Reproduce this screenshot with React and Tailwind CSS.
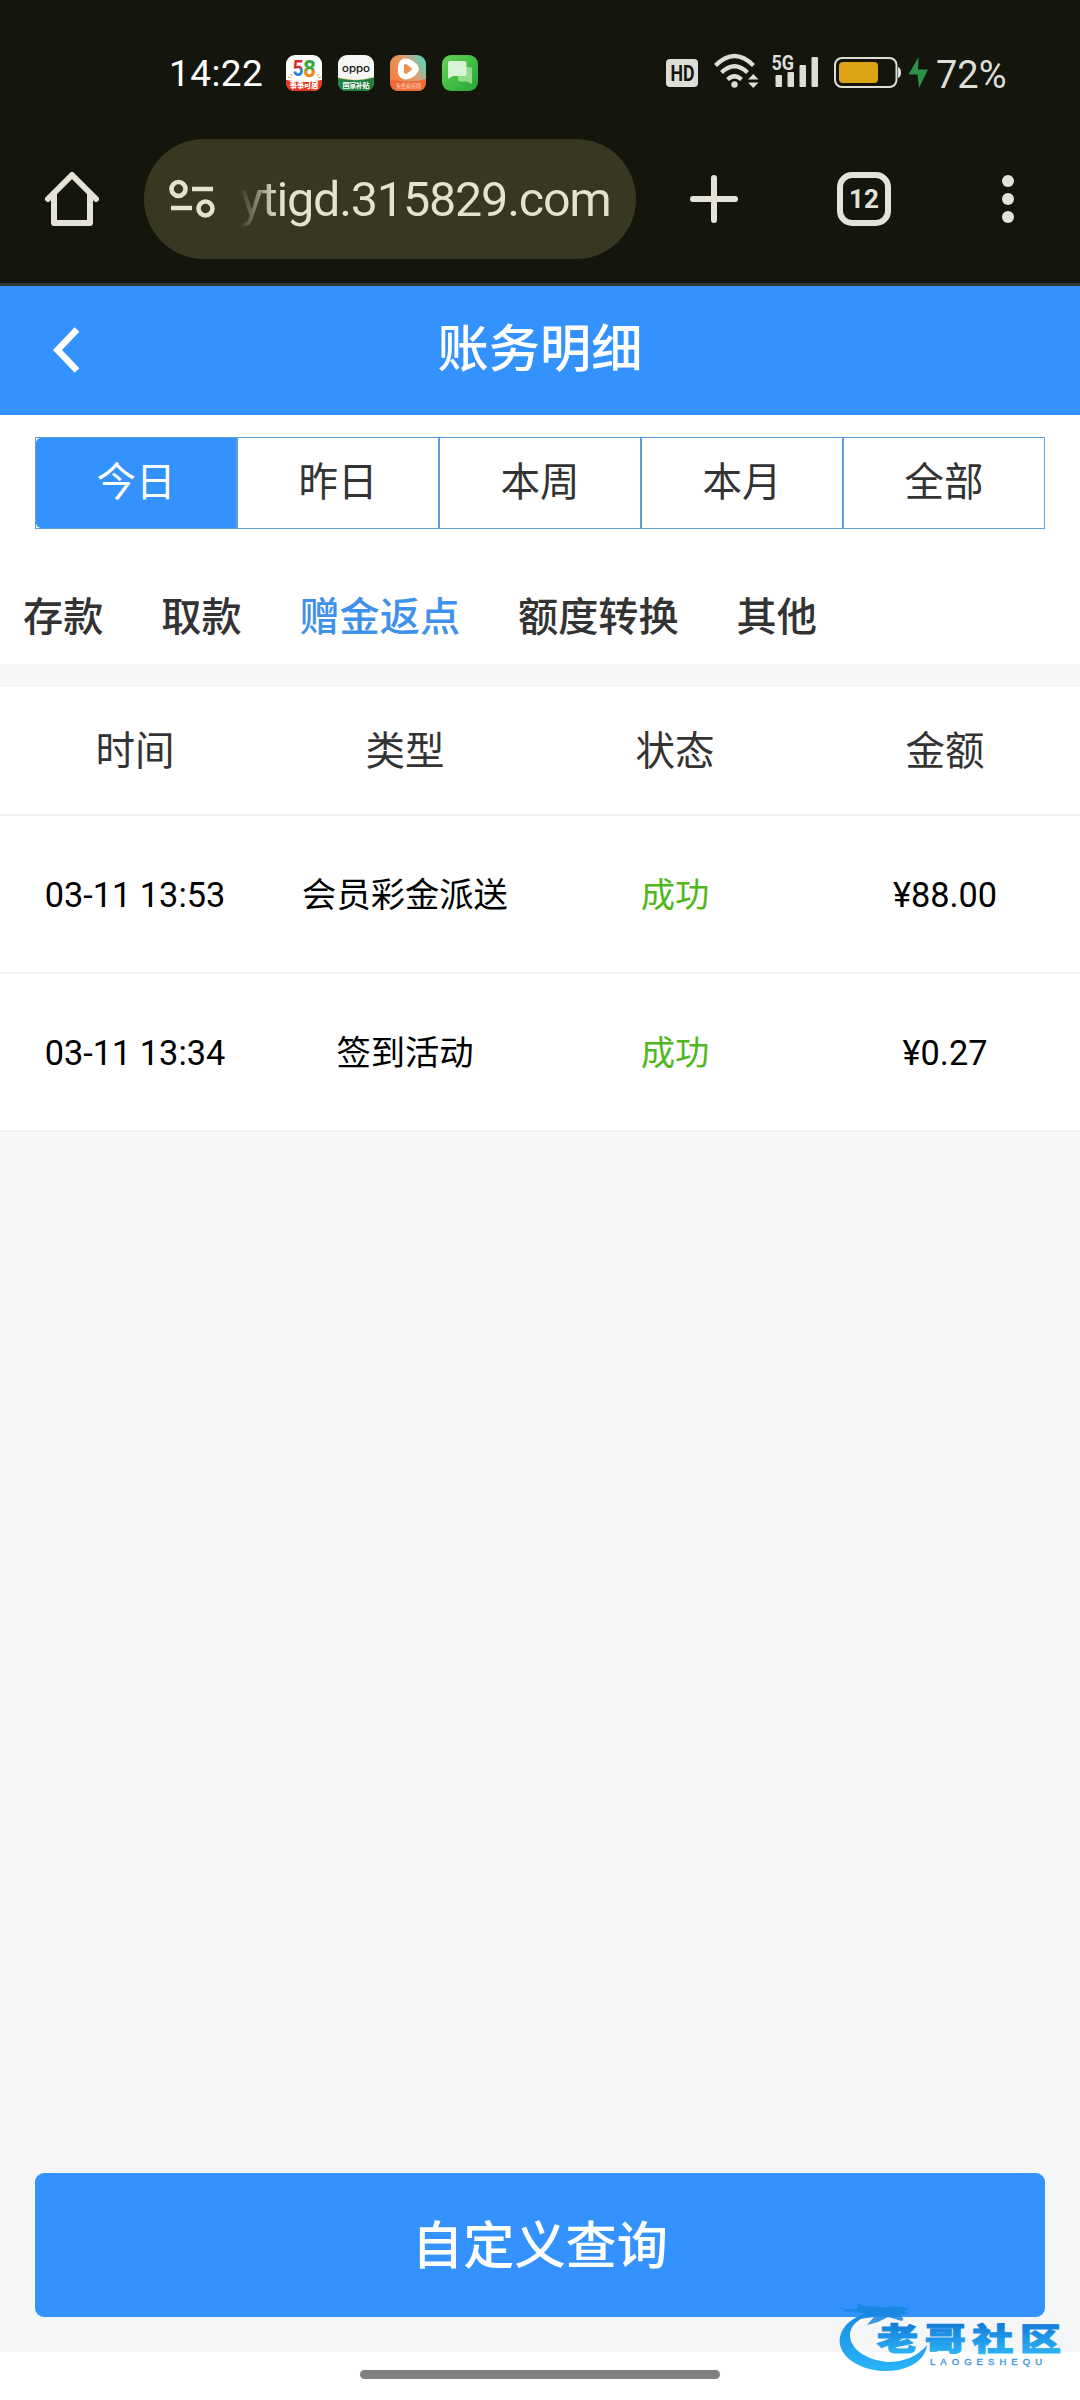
import React, { useState } from 'react';

const ranges = ['今日', '昨日', '本周', '本月', '全部'];
const categories = ['存款', '取款', '赠金返点', '额度转换', '其他'];
const columns = ['时间', '类型', '状态', '金额'];
const records = [
  { time: '03-11 13:53', type: '会员彩金派送', status: '成功', amount: '¥88.00' },
  { time: '03-11 13:34', type: '签到活动', status: '成功', amount: '¥0.27' },
];

const App58 = () => (
  <svg className="size-9" viewBox="0 0 36 36">
    <defs>
      <linearGradient id="five" x1="0" y1="0" x2="0" y2="1">
        <stop offset="0.45" stopColor="#e02a2a" />
        <stop offset="0.55" stopColor="#1f86d8" />
      </linearGradient>
      <linearGradient id="eight" x1="0" y1="0" x2="0" y2="1">
        <stop offset="0.5" stopColor="#2fa836" />
        <stop offset="0.6" stopColor="#f08a1c" />
      </linearGradient>
    </defs>
    <rect width="36" height="36" rx="9" fill="#fff" />
    <path d="M0 25 Q18 28 36 25 V27 Q36 36 27 36 H9 Q0 36 0 27Z" fill="#e2391c" />
    <path d="M4 19l2 2M2 22l3 1M31 21l2-2M32 23l3-1" stroke="#f0a030" strokeWidth="1" />
    <text x="6.500" y="21" fontSize="22" fontWeight="700" fill="url(#five)" fontFamily="Roboto, sans-serif" textLength="11" lengthAdjust="spacingAndGlyphs">5</text>
    <text x="17" y="21.500" fontSize="24" fontWeight="700" fill="url(#eight)" fontFamily="Roboto, sans-serif" textLength="13" lengthAdjust="spacingAndGlyphs">8</text>
    <text x="3.500" y="33" fontSize="7.500" fontWeight="900" fill="#fff" fontFamily="'Noto Sans CJK SC', sans-serif" textLength="29">事事可居</text>
  </svg>
);

const AppOppo = () => (
  <svg className="size-9" viewBox="0 0 36 36">
    <rect width="36" height="36" rx="9" fill="#f5f5f3" />
    <path d="M0 22 Q18 27 36 21.500 V25 H0Z" fill="#e6e29a" />
    <path d="M0 23 Q18 27.500 36 22.500 V27 Q36 36 27 36 H9 Q0 36 0 27Z" fill="#23803d" />
    <text x="4" y="16.500" fontSize="9.500" fontWeight="500" fill="#111" fontFamily="Inter, sans-serif" textLength="28" lengthAdjust="spacingAndGlyphs">oppo</text>
    <text x="4.500" y="32.500" fontSize="7" fontWeight="700" fill="#fff" fontFamily="'Noto Sans CJK SC', sans-serif" textLength="27">国家补贴</text>
  </svg>
);

const AppVideo = () => (
  <svg className="size-9" viewBox="0 0 36 36">
    <defs>
      <linearGradient id="videoBg" x1="0" y1="0.6" x2="1" y2="0">
        <stop offset="0.1" stopColor="#ef8340" />
        <stop offset="0.55" stopColor="#dda075" />
        <stop offset="0.85" stopColor="#69cfae" />
      </linearGradient>
    </defs>
    <rect width="36" height="36" rx="9" fill="url(#videoBg)" />
    <path d="M0 24 Q18 29 36 24 V27 Q36 36 27 36 H9 Q0 36 0 27Z" fill="#f06a38" />
    <path d="M9 8 Q11 2 19 4 Q28 8 29 14 Q28 20 19 24 Q10 26 8 18 Q7.500 12 9 8Z" fill="#fff" />
    <path d="M14 10 Q15 8.500 17 9.500 L21.500 13 Q22.500 14 21.500 15 L17 18.500 Q14.500 19.500 14 17.500Z" fill="#e89350" />
    <text x="6" y="33" fontSize="5.500" fill="#ffd9c0" fontFamily="'Noto Sans CJK SC', sans-serif" textLength="25" lengthAdjust="spacingAndGlyphs">免费看短剧</text>
  </svg>
);

const AppChat = () => (
  <svg className="size-9" viewBox="0 0 36 36">
    <defs>
      <linearGradient id="chatBg" x1="0" y1="0" x2="1" y2="1">
        <stop offset="0" stopColor="#62d354" />
        <stop offset="1" stopColor="#27a834" />
      </linearGradient>
    </defs>
    <rect width="36" height="36" rx="9" fill="url(#chatBg)" />
    <path d="M18 12 H28 Q30 12 30 14 V29 L25 26.500 H18 Q16 26.500 16 24.500 V14 Q16 12 18 12Z" fill="#92dd8b" />
    <path d="M8 6 H22.500 Q24.500 6 24.500 8 V19 Q24.500 21 22.500 21 H11 L6 24 V8 Q6 6 8 6Z" fill="#def5dc" fillOpacity="0.95" />
  </svg>
);

const StatusBar = () => (
  <div className="flex h-[120px] items-start pl-[169px] pt-[55px]">
    <span className="w-[117px] font-[Roboto] text-[37px] leading-[37px] tracking-[0.4px] text-white">14:22</span>
    <div className="flex gap-4">
      <App58 />
      <AppOppo />
      <AppVideo />
      <AppChat />
    </div>
    <svg className="-mt-[5px] ml-[182px] h-[44px] w-[272px]" viewBox="660 50 272 44" fill="#deded9">
      <rect x="666" y="59" width="32" height="28" rx="4" />
      <text x="670.500" y="81" fontSize="22" fontWeight="700" fill="#14150d" fontFamily="Roboto, sans-serif" textLength="24" lengthAdjust="spacingAndGlyphs">HD</text>
      <g fill="none" stroke="#deded9" strokeWidth="4.200">
        <path d="M715.500 65.500 Q734.500 46.500 753.500 65.500" />
        <path d="M721.500 72.500 Q734.500 60 747.500 72.500" />
        <path d="M727.500 79.500 Q734.500 73 741.500 79.500" />
      </g>
      <circle cx="734.500" cy="84.500" r="3.200" />
      <path d="M748 79.500 L753.300 74 L758.500 79.500Z M748 82.500 L753.300 88 L758.500 82.500Z" />
      <text x="771.500" y="70" fontSize="20" fontWeight="700" fontFamily="Roboto, sans-serif" textLength="22.500" lengthAdjust="spacingAndGlyphs">5G</text>
      <rect x="775.500" y="75" width="6.500" height="12" rx="1" />
      <rect x="787.500" y="72" width="6.500" height="15" rx="1" />
      <rect x="799.500" y="65" width="6.500" height="22" rx="1" />
      <rect x="811.500" y="57" width="6.500" height="30" rx="1" />
      <rect x="835" y="58" width="61.500" height="29" rx="7" fill="none" stroke="#deded9" strokeWidth="2" />
      <rect x="839" y="62" width="39" height="21" rx="4" fill="#dca314" />
      <path d="M898 67 Q901 68 901 72.500 Q901 77 898 78Z" />
      <path d="M918.500 57 L908.500 74.500 H917.500 L919 88 L928 69.500 H918Z" fill="#2b9348" />
    </svg>
    <span className="ml-[4px] font-[Roboto] text-[38px] leading-[40px] text-[#deded9]">72%</span>
  </div>
);

const BrowserBar = () => (
  <div className="flex h-[166px] items-start border-b-[3px] border-[#33362f] pt-[19px]">
    <div className="flex h-[120px] w-[144px] items-center justify-center">
      <svg className="size-[60px]" viewBox="0 0 60 60" fill="none" stroke="#e5e3d8" strokeWidth="6" strokeLinecap="round" strokeLinejoin="round">
        <path d="M6 30 L30 6 L54 30" />
        <path d="M12 25 V54 H48 V25" />
      </svg>
    </div>
    <div className="flex h-[120px] w-[492px] items-center rounded-full bg-[#373722] pl-[25px]">
      <svg className="h-[40px] w-[46px] shrink-0" viewBox="0 0 46 40" fill="none" stroke="#e5e3d0" strokeWidth="4.600">
        <circle cx="9.500" cy="10" r="7" />
        <path d="M23 10 H44 M2 29 H23" />
        <circle cx="36.500" cy="29.500" r="7" />
      </svg>
      <span className="ml-[25px] mt-[1px] whitespace-nowrap bg-linear-to-r from-[#e5e3d0]/0 via-[#e5e3d0] via-10% to-[#e5e3d0] bg-clip-text font-[Roboto] text-[48.5px] leading-[64px] tracking-[-1.2px] text-transparent">
        ytigd.315829.com
      </span>
    </div>
    <div className="flex h-[120px] flex-1 items-center">
      <svg className="ml-[54px] size-[48px]" viewBox="0 0 48 48" stroke="#e5e3d8" strokeWidth="6" strokeLinecap="round">
        <path d="M24 3 V45 M3 24 H45" />
      </svg>
      <div className="ml-[99px] flex size-[54px] items-center justify-center rounded-[15px] border-[6px] border-[#e5e3d8] font-[Roboto] text-[26px] font-bold leading-none text-[#e5e3d8]">
        12
      </div>
      <svg className="ml-[111px] h-[48px] w-[12px]" viewBox="0 0 12 48" fill="#e5e3d8">
        <circle cx="6" cy="6" r="6" />
        <circle cx="6" cy="24" r="6" />
        <circle cx="6" cy="42" r="6" />
      </svg>
    </div>
  </div>
);

const Watermark = () => (
  <svg className="absolute left-[836px] top-[2298px] h-[76px] w-[230px]" viewBox="836 2298 230 76">
    <defs>
      <linearGradient id="wave" gradientUnits="userSpaceOnUse" x1="0" y1="2304" x2="0" y2="2370">
        <stop offset="0" stopColor="#1684dd" />
        <stop offset="1" stopColor="#29b4f8" />
      </linearGradient>
      <linearGradient id="brand" x1="0" y1="0" x2="0" y2="1">
        <stop offset="0.25" stopColor="#147fdb" />
        <stop offset="0.9" stopColor="#2cb2f6" />
      </linearGradient>
    </defs>
    <path d="M870 2312 C846 2318 836 2334 841 2348 C848 2366 876 2374 898 2370 C914 2367 926 2357 927 2345 C918 2356 904 2362 888 2362 C866 2360 850 2349 850 2335 C850 2324 862 2316 876 2314Z" fill="url(#wave)" />
    <path d="M839 2307 Q848 2311 858 2308 L857 2303 Q866 2308 876 2306 Q884 2309 892 2306 L910 2308 L904 2311 L910 2314 L898 2315 Q906 2318 902 2321 L888 2317 L878 2322 L867 2325 L874 2317 L860 2319 L866 2313 L846 2312Z" fill="#1686df" fillOpacity="0.85" />
    <g transform="translate(877 2349.500) scale(1 0.740)">
      <text fontSize="41" fontWeight="900" fill="url(#brand)" stroke="url(#brand)" strokeWidth="1.500" fontFamily="'Noto Sans CJK SC', sans-serif" textLength="184">老哥社区</text>
    </g>
    <text x="930" y="2364.500" fontSize="9.500" fill="#3f9ae2" stroke="#3f9ae2" strokeWidth="0.400" fontFamily="'Liberation Sans', sans-serif" textLength="112">LAOGESHEQU</text>
  </svg>
);

const App = () => {
  const [range, setRange] = useState('今日');
  const [category, setCategory] = useState('赠金返点');

  return (
    <div className="relative flex h-[2400px] w-[1080px] flex-col overflow-hidden bg-[#f4f6f8] font-[Roboto,'Noto_Sans_CJK_SC',sans-serif] text-[#333]">
      <div className="bg-[#14150d]">
        <StatusBar />
        <BrowserBar />
      </div>

      <header className="grid h-[129px] grid-cols-[120px_1fr_120px] items-center bg-[#3492ff] pb-[2px] text-white">
        <svg className="ml-[52px] h-[46px] w-[28px]" viewBox="0 0 28 46" fill="none" stroke="#fff" strokeWidth="6.500">
          <path d="M25 2.500 L5.500 23 L25 43.500" />
        </svg>
        <h1 className="text-center text-[51.2px] font-medium leading-[64px]">账务明细</h1>
      </header>

      <div className="h-[249px] bg-white pt-[22px]">
        <div className="mx-[35px] flex h-[92px] divide-x-2 divide-[#5a9fdc] border border-[#5a9fdc]">
          {ranges.map((item) => (
            <button
              key={item}
              onClick={() => setRange(item)}
              className={`flex-1 text-[39.5px] leading-[56px] ${item === range ? 'rounded-l-[5px] bg-[#3492ff] text-white' : ''}`}
            >
              {item}
            </button>
          ))}
        </div>
        <div className="mt-[59px] flex gap-[57.8px] pl-[23px] text-[40.2px] font-medium leading-[60px]">
          {categories.map((item) => (
            <button
              key={item}
              onClick={() => setCategory(item)}
              className={item === category ? 'text-[#3f91ec]' : ''}
            >
              {item}
            </button>
          ))}
        </div>
      </div>

      <div className="mt-[23px] bg-white text-center">
        <div className="grid h-[129px] grid-cols-4 items-center border-b-2 border-[#f0f1f2] pt-[3px] text-[39.5px]">
          {columns.map((item) => (
            <span key={item}>{item}</span>
          ))}
        </div>
        {records.map((row) => (
          <div
            key={row.time}
            className="grid h-[158px] grid-cols-4 items-center border-b-2 border-[#f0f1f2] pt-[3px] text-[34.3px] text-black"
          >
            <span>{row.time}</span>
            <span>{row.type}</span>
            <span className="text-[#50b71d]">{row.status}</span>
            <span>{row.amount}</span>
          </div>
        ))}
      </div>

      <button className="mx-[35px] mb-[35px] mt-auto h-[144px] shrink-0 rounded-[9px] bg-[#3492ff] pt-[4px] text-[51.2px] font-medium text-white">
        自定义查询
      </button>

      <div className="flex h-12 shrink-0 justify-center bg-white pt-[18px]">
        <div className="h-[9px] w-[360px] rounded-full bg-[#808080]" />
      </div>

      <Watermark />
    </div>
  );
};

export default App;
